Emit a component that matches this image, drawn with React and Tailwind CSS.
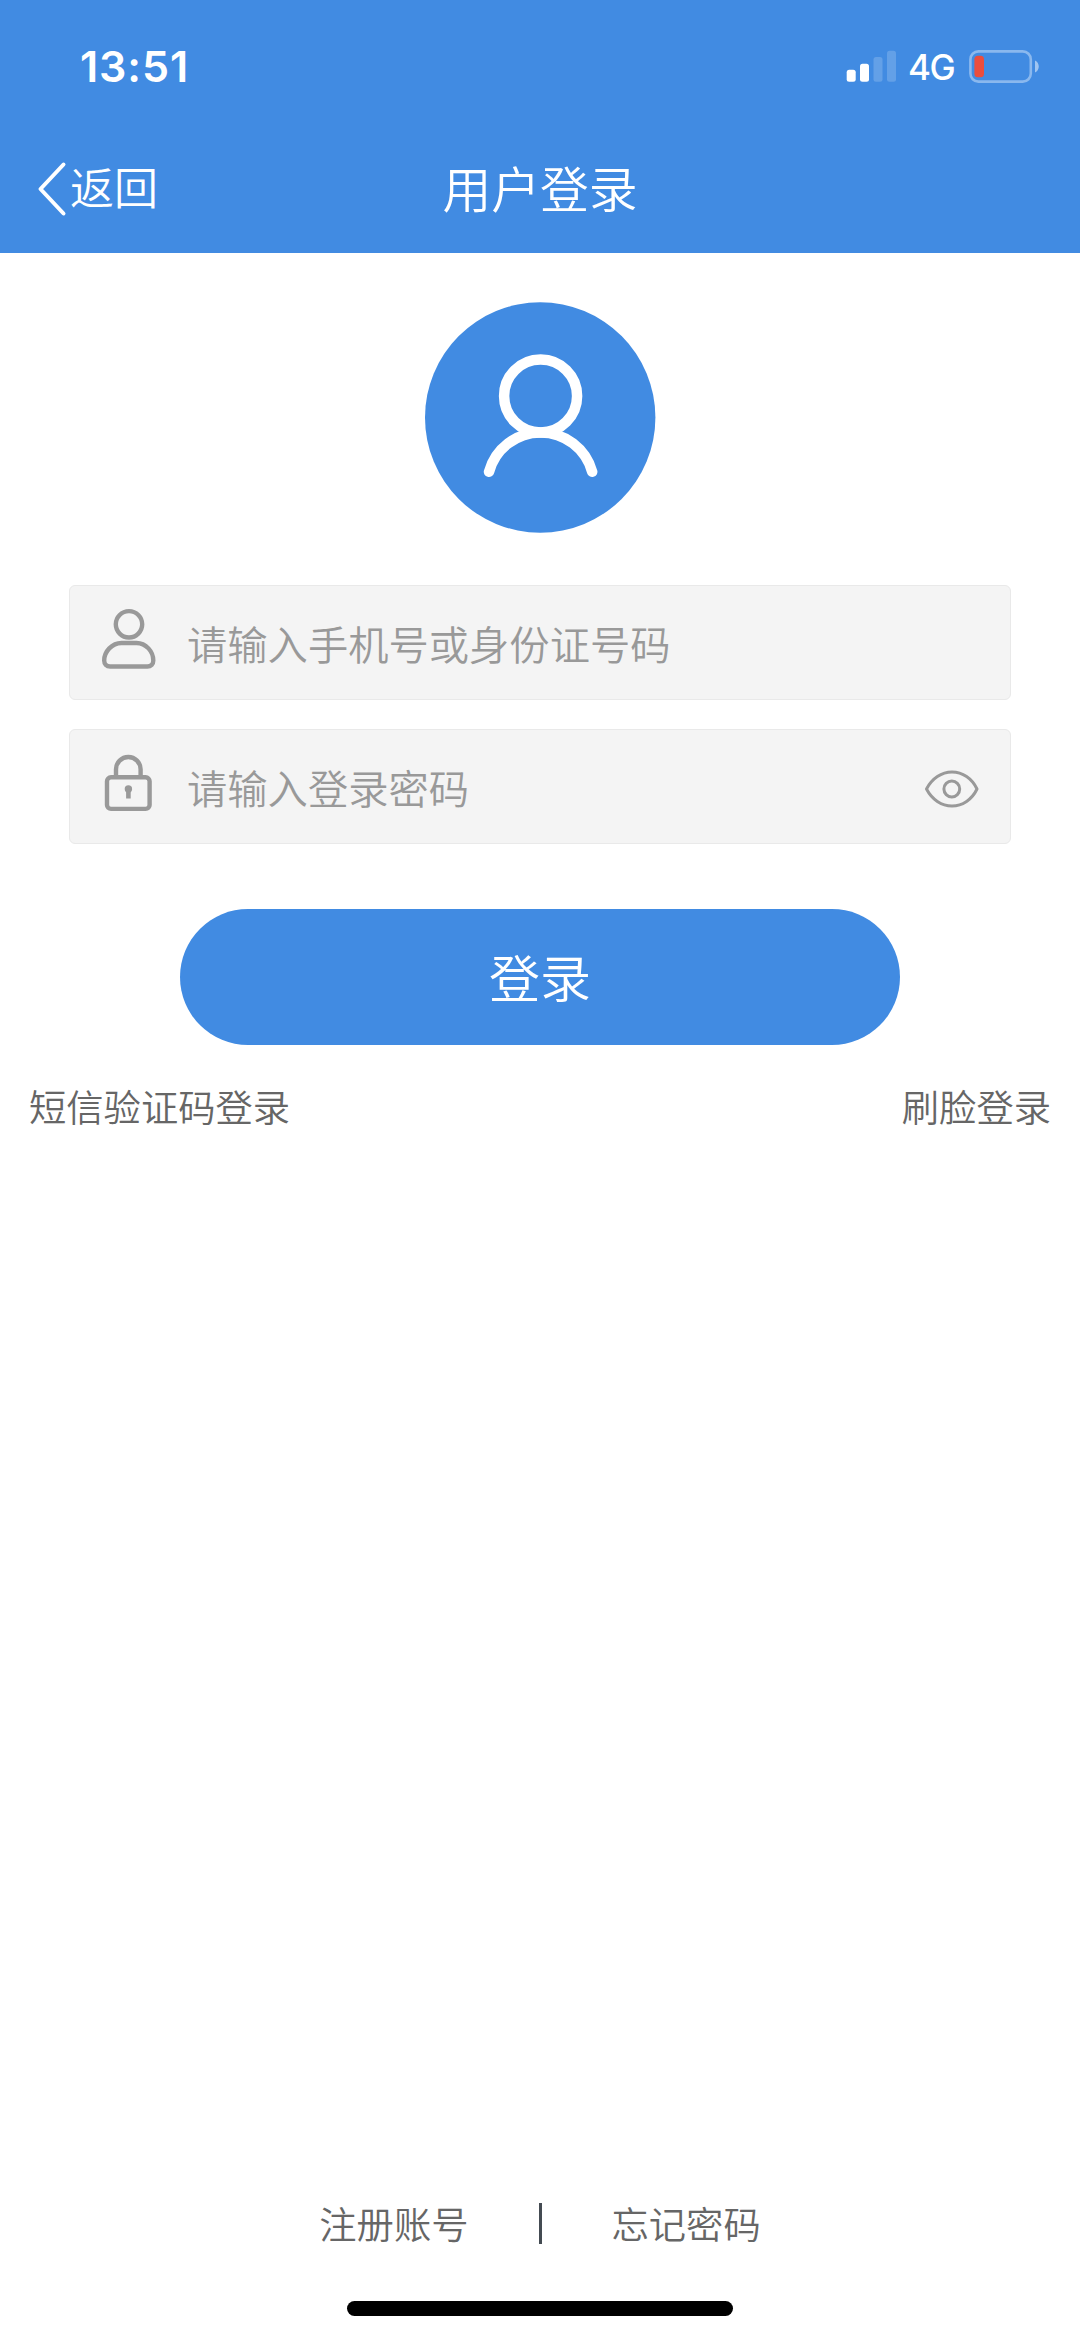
import React from "react";

const StatusBar = () => (
    <div className="flex h-[132px] items-center justify-between pl-[80px] pr-[40px]">
        <span className="pt-[1px] font-[Inter] text-[43px] leading-none font-semibold tracking-[0.9px]">13:51</span>
        <div className="flex items-center">
            <svg className="h-[32px] w-[50px]" viewBox="0 0 50 32" fill="white">
                <rect x="0.7" y="19.7" width="9" height="12" rx="2.5" />
                <rect x="14" y="13.7" width="9" height="18" rx="2.5" />
                <rect x="27.5" y="7" width="9" height="24.7" rx="2.5" opacity="0.18" />
                <rect x="41" y="0.7" width="9" height="31" rx="2.5" opacity="0.18" />
            </svg>
            <span className="ml-[12px] w-[48px] pt-[3px] font-[Inter] text-[35px] leading-none font-medium tracking-[-1.5px]">4G</span>
            <svg className="ml-[13px] h-[33px] w-[71px]" viewBox="0 0 71 33" fill="none">
                <rect x="1.4" y="1.4" width="60.4" height="30.2" rx="8" stroke="#8ab8ee" strokeWidth="2.6" />
                <rect x="5.4" y="5.8" width="9.6" height="21.4" rx="3.5" fill="#eb4d3d" />
                <path d="M66 10.5c5 2 5 10 0 12Z" fill="#a0c5f1" />
            </svg>
        </div>
    </div>
);

const UserIcon = () => (
    <svg className="mb-[10px] h-[62px] w-[60px]" viewBox="0 0 60 62" fill="none" stroke="#999" strokeWidth="4.4">
        <circle cx="30" cy="17.3" r="13.2" />
        <path d="M22.5 36h15C47 36 54.3 44.5 54.3 53.5c0 3.8-2.3 6-6 6H11.2c-3.7 0-6-2.2-6-6C5.2 44.5 13 36 22.5 36Z" />
    </svg>
);

const LockIcon = () => (
    <svg className="mb-[10px] h-[62px] w-[60px]" viewBox="0 0 60 62" fill="none" stroke="#999" strokeWidth="4.4">
        <rect x="8" y="26.3" width="42.6" height="31.6" rx="4" />
        <path d="M17 26V18.3a12.3 12.3 0 0 1 24.6 0V26" />
        <circle cx="29.4" cy="38" r="3.7" fill="#999" stroke="none" />
        <path d="M29.4 38.5v9" strokeWidth="4.6" />
    </svg>
);

const EyeIcon = () => (
    <svg className="mt-[4px] h-[40px] w-[56px]" viewBox="0 0 56 40" fill="none" stroke="#999" strokeWidth="3">
        <path d="M2.5 20C8 9.500 17.500 3 28 3S48 9.500 53 20C48 30.500 38.500 37 28 37S8 30.500 2.500 20Z" strokeLinejoin="round" />
        <circle cx="27.8" cy="20" r="7.9" />
    </svg>
);

const Field = ({ icon, label, children }) => (
    <div className="flex h-[115px] items-center rounded-[6px] border border-[#e9e9e9] bg-[#f4f4f4] pl-[29px] pr-[30px]">
        {icon}
        <span className="ml-[28px] flex-1 pt-[2px] text-[40.3px] leading-none text-[#999]">{label}</span>
        {children}
    </div>
);

const App = () => {
    return (
        <div className="flex h-[2339px] w-[1080px] flex-col bg-white font-['Noto_Sans_CJK_SC',sans-serif] font-[350]">
            <header className="h-[253px] bg-[#418be2] text-white">
                <StatusBar />
                <div className="grid h-[113px] grid-cols-3 items-center">
                    <div className="flex items-center pl-[36px]">
                        <svg className="h-[56px] w-[34px]" viewBox="0 0 34 56" fill="none" stroke="white" strokeWidth="4" strokeLinecap="round" strokeLinejoin="round">
                            <path d="M27.5 3.5 4.5 28l23 24.5" />
                        </svg>
                        <span className="pb-[6px] text-[44px] leading-none">返回</span>
                    </div>
                    <h1 className="pb-[2px] text-center text-[48.8px] leading-none font-[350]">用户登录</h1>
                </div>
            </header>

            <main className="flex flex-1 flex-col pt-[49px]">
                <svg className="h-[231px] w-[231px] self-center" viewBox="0 0 231 231" fill="none" stroke="white" strokeWidth="10.5" strokeLinecap="round">
                    <circle cx="115.2" cy="115.5" r="115.2" fill="#418be2" stroke="none" />
                    <circle cx="115.6" cy="94" r="36.5" />
                    <path d="M64 169.8a53.5 53.5 0 0 1 103.2 0" />
                </svg>

                <div className="mx-[69px] mt-[52px] flex flex-col gap-[29px]">
                    <Field icon={<UserIcon />} label="请输入手机号或身份证号码" />
                    <Field icon={<LockIcon />} label="请输入登录密码">
                        <EyeIcon />
                    </Field>
                </div>

                <button className="mt-[65px] h-[136px] w-[720px] self-center rounded-full bg-[#418be2] pb-[2px] text-[51px] leading-none text-white">
                    登录
                </button>

                <div className="mt-[41px] flex justify-between px-[29px] text-[37.3px] leading-[40px] text-[#666]">
                    <span>短信验证码登录</span>
                    <span>刷脸登录</span>
                </div>
            </main>

            <footer className="flex flex-col items-center">
                <div className="flex items-center text-[37.3px] leading-[40px] text-[#666]">
                    <span className="pb-[1px]">注册账号</span>
                    <span className="mr-[70px] ml-[70px] h-[41px] w-[3px] bg-[#444b52]" />
                    <span className="pb-[1px]">忘记密码</span>
                </div>
                <div className="mt-[57px] mb-[23px] h-[15px] w-[386px] rounded-full bg-black" />
            </footer>
        </div>
    );
};

export default App;
